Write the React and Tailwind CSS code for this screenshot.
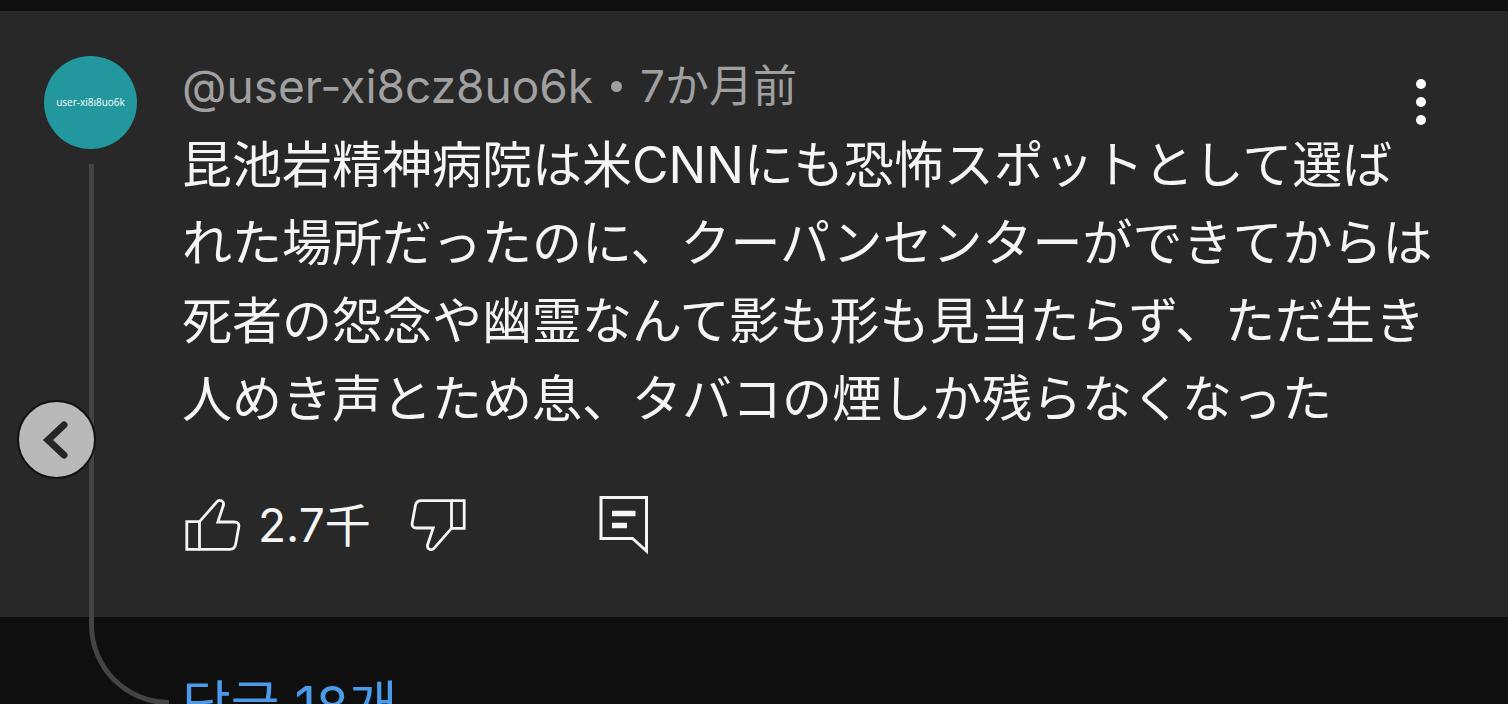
function ThumbIcon({ className = '' }) {
  return (
    <svg className={`h-[58px] w-[62px] ${className}`} viewBox="-3 -3 62 58" fill="none" stroke="currentColor" strokeWidth="2.8" aria-hidden="true">
      <path d="M14.5 22.7H1.8V50.3H14.5" />
      <path d="M14.5 50.3V22.7L31.6 3.2C34.5 -0.3 39.5 2 38.4 6.3L32.8 23H49.5C52.7 23 54.4 25 53.8 28L50.6 45.5C50 48.6 47.8 50.3 44.8 50.3Z" />
    </svg>
  );
}

function CommentIcon() {
  return (
    <svg className="h-[60px] w-[50px]" viewBox="0 0 50 60" fill="none" stroke="currentColor" strokeWidth="3" aria-hidden="true">
      <path d="M2 2.5H47.5V56L33.5 43.5H2Z" />
      <path d="M13 18.5H36.5M13 30.5H28" strokeWidth="5.5" />
    </svg>
  );
}

function MoreIcon() {
  return (
    <svg className="h-[50px] w-[34px]" viewBox="0 0 34 50" fill="currentColor" aria-hidden="true">
      <circle cx="17" cy="8" r="5" />
      <circle cx="17" cy="26" r="5" />
      <circle cx="17" cy="44" r="5" />
    </svg>
  );
}

function Avatar() {
  return (
    <div className="flex h-[93px] w-[93px] items-center justify-center rounded-full bg-[#22979e] font-['Open_Sans'] text-[10px] text-white">
      user-xi8ı8uo6k
    </div>
  );
}

export default function App() {
  return (
    <main
      lang="ja"
      className="relative h-screen overflow-hidden bg-[#0f0f0f] pt-[11px] font-['Inter','Noto_Sans_CJK_JP',sans-serif] text-[#f5f5f5]"
    >
      <article className="flex gap-[45px] bg-[#282828] pr-[70px] pl-[44px]">
        {/* Avatar and thread line */}
        <div className="flex shrink-0 flex-col pt-[45px]">
          <Avatar />
          <div className="mt-[15px] ml-[45px] w-[5px] flex-1 bg-[#444444]" />
        </div>

        <div className="min-w-0 flex-1 pt-[45px] pb-[62px]">
          <header className="flex h-[70px] items-start justify-between">
            <div className="flex items-center gap-[18px] leading-[60px] whitespace-nowrap text-[#a0a0a0]">
              <a href="#user" className="text-[46px]">@user-xi8cz8uo6k</a>
              <span className="h-[11px] w-[11px] rounded-full bg-[#a0a0a0]" />
              <time className="text-[44px]">7か月前</time>
            </div>
            <button type="button" aria-label="その他" className="mt-5 text-white">
              <MoreIcon />
            </button>
          </header>

          <p className="text-[50px] leading-[78px]">
            昆池岩精神病院は米CNNにも恐怖スポットとして選ばれた場所だったのに、クーパンセンターができてからは死者の怨念や幽霊なんて影も形も見当たらず、ただ生き人めき声とため息、タバコの煙しか残らなくなった
          </p>

          {/* Actions */}
          <div className="mt-[57px] flex h-[60px] items-center">
            <button type="button" className="flex items-center gap-[14px]">
              <ThumbIcon />
              <span className="text-[46px] leading-[60px]">2.7千</span>
            </button>
            <button type="button" aria-label="低評価" className="ml-9">
              <ThumbIcon className="rotate-180" />
            </button>
            <button type="button" aria-label="返信" className="ml-[130px]">
              <CommentIcon />
            </button>
          </div>
        </div>
      </article>

      {/* Replies */}
      <div className="flex items-start pl-[89px]">
        <div className="h-[88px] w-[80px] shrink-0 rounded-bl-[80px] border-b-[5px] border-l-[5px] border-[#444444]" />
        <a href="#replies" lang="ko" className="mt-[54px] ml-[13px] font-['Inter','Noto_Sans_CJK_KR',sans-serif] text-[53px] leading-[70px] whitespace-nowrap text-[#4b9bea]">
          답글 18개
        </a>
      </div>

      <button
        type="button"
        aria-label="前へ"
        className="absolute top-[400px] left-[17px] flex h-[79px] w-[79px] items-center justify-center rounded-full border-2 border-[#111111] bg-[#b9b9b9] text-[#262626]"
      >
        <svg className="h-10 w-10" viewBox="0 0 40 40" fill="none" stroke="currentColor" strokeWidth="7" strokeLinecap="round" aria-hidden="true">
          <path d="M27 5L11 20L27 35" />
        </svg>
      </button>
    </main>
  );
}
